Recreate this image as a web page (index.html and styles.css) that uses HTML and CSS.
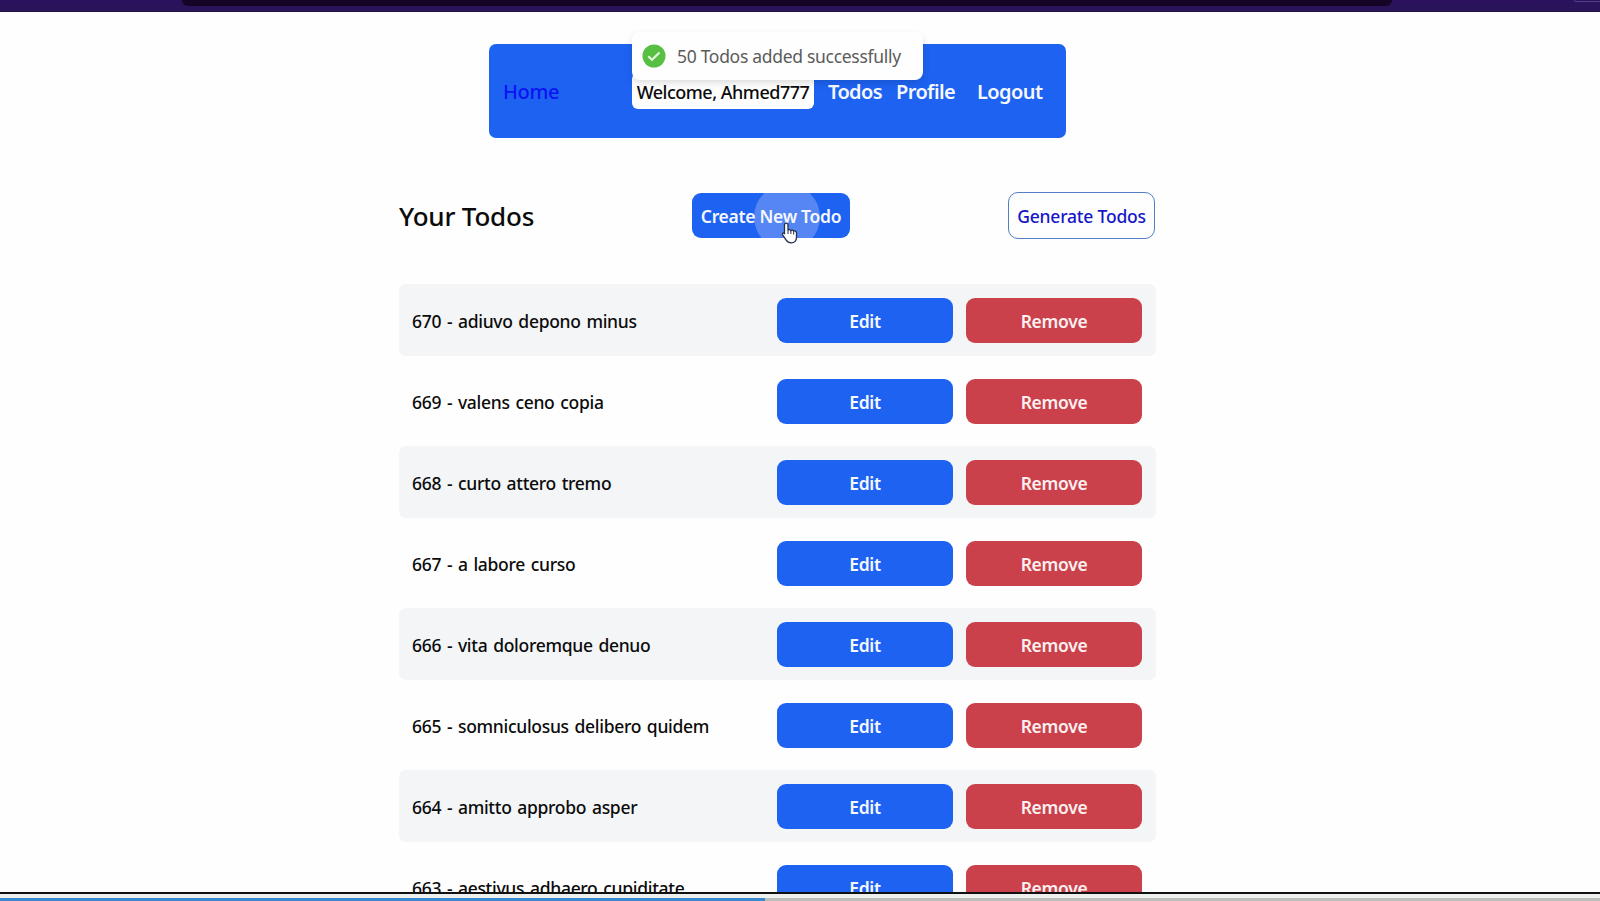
FILE: index.html
```html
<!DOCTYPE html>
<html lang="en">
<head>
<meta charset="utf-8">
<title>Your Todos</title>
<link rel="stylesheet" href="styles.css">
</head>
<body>
<div class="browser-edge"><div class="address"></div><div class="edge-tab"></div></div>
<main class="page">
  <nav class="navbar">
    <a class="home">Home</a>
    <span class="welcome">Welcome, Ahmed777</span>
    <a class="nav-todos">Todos</a>
    <a class="nav-profile">Profile</a>
    <a class="nav-logout">Logout</a>
  </nav>
  <header class="heading">
    <h1>Your Todos</h1>
    <button class="btn create"><span class="ripple"></span><span class="label">Create New Todo</span></button>
    <button class="generate">Generate Todos</button>
  </header>
  <ul class="todos">
    <li><p>670 - adiuvo depono minus</p><button class="btn">Edit</button><button class="btn remove">Remove</button></li>
    <li><p>669 - valens ceno copia</p><button class="btn">Edit</button><button class="btn remove">Remove</button></li>
    <li><p>668 - curto attero tremo</p><button class="btn">Edit</button><button class="btn remove">Remove</button></li>
    <li><p>667 - a labore curso</p><button class="btn">Edit</button><button class="btn remove">Remove</button></li>
    <li><p>666 - vita doloremque denuo</p><button class="btn">Edit</button><button class="btn remove">Remove</button></li>
    <li><p>665 - somniculosus delibero quidem</p><button class="btn">Edit</button><button class="btn remove">Remove</button></li>
    <li><p>664 - amitto approbo asper</p><button class="btn">Edit</button><button class="btn remove">Remove</button></li>
    <li><p>663 - aestivus adhaero cupiditate</p><button class="btn">Edit</button><button class="btn remove">Remove</button></li>
  </ul>
</main>
<div class="toast">
  <svg width="24" height="24" viewBox="0 0 24 24"><circle cx="12" cy="12" r="11.5" fill="#57bf41"/><path d="M6.3 12.200l3.700 3.500 7.500-7.200" fill="none" stroke="#e4f6de" stroke-width="2.200"/></svg>
  <span>50 Todos added successfully</span>
</div>
<svg class="cursor" width="18" height="22" viewBox="0 0 18 22"><path d="M5.3 1.200c1.100 0 1.700.8 1.700 1.800v5.200c.4-.9 2.500-.8 2.900.4.700-.8 2.300-.5 2.700.6 1-.6 2.900-.1 2.900 1.600v4.400c0 3.200-2 5.600-5.200 5.600-2.700 0-4-.9-5.100-2.700L1.600 12.800c-.8-1.400.8-2.400 1.900-1.400V3c0-1 .7-1.800 1.800-1.800z" fill="#fff" stroke="#25304a" stroke-width="1.300"/><path d="M7 8v4M9.900 9v3M12.700 10v2.500" stroke="#25304a" stroke-width="1"/></svg>
<footer class="player"><div class="track"><div class="played"></div></div></footer>
</body>
</html>
```

FILE: styles.css
```css
* { box-sizing: border-box; }
body {
  margin: 0;
  height: 901px;
  overflow: hidden;
  display: flex;
  flex-direction: column;
  background: #fefefe;
  color: #0b0b0b;
  font-family: "Noto Sans", "Open Sans", sans-serif;
  font-weight: 500;
}
.browser-edge {
  flex: none;
  display: flex;
  justify-content: space-between;
  height: 12px;
  padding-left: 182px;
  background: linear-gradient(#2b1260, #281657 90%, #1c1040);
}
.address { width: 1210px; height: 6px; background: #150425; border-radius: 0 0 6px 6px; }
.edge-tab { width: 26px; height: 2px; border-bottom: 1px solid #51407f; border-left: 1px solid #51407f; border-radius: 0 0 0 3px; }
.page { flex: 1; min-height: 0; width: 757px; margin-left: 399px; overflow: hidden; }
.navbar {
  display: flex;
  align-items: center;
  width: 577px;
  height: 94px;
  margin: 32px 0 0 90px;
  padding-left: 14px;
  border-radius: 7px;
  background: #1d62f0;
  color: #f5f8ff;
  font-size: 20px;
  font-weight: 600;
  letter-spacing: -0.6px;
  white-space: nowrap;
}
.home { width: 129px; color: #0b12f5; font-weight: 500; letter-spacing: -0.4px; }
.welcome {
  width: 182px;
  height: 36px;
  padding-top: 2px;
  line-height: 34px;
  border-radius: 6px;
  background: #fefefe;
  color: #0b0b0b;
  font-size: 18px;
  font-weight: 500;
  text-align: center;
  letter-spacing: -0.5px;
}
.nav-todos { width: 68px; margin-left: 14px; }
.nav-profile { width: 81px; }
.heading { display: flex; justify-content: space-between; align-items: center; height: 47px; margin-top: 54px; }
h1 { width: 293px; margin: 0; padding-top: 1px; font-size: 26px; line-height: 47px; font-weight: 500; letter-spacing: -0.2px; }
button { font-family: inherit; font-size: 17.5px; padding: 0; white-space: nowrap; }
.btn { width: 176px; height: 45px; border: 0; border-radius: 9px; background: #1d62f0; color: #f5f8ff; font-weight: 600; letter-spacing: -0.3px; }
.btn.create { position: relative; width: 158px; overflow: hidden; margin-right: 158px; }
.ripple { position: absolute; left: 62px; top: -9px; width: 66px; height: 66px; border-radius: 50%; background: #5686f3; }
.label { position: relative; }
.generate { width: 147px; height: 47px; border: 1px solid #527fc5; border-radius: 10px; background: #fefefe; color: #1616c8; font-weight: 500; letter-spacing: -0.2px; margin-right: 1px; }
.todos { margin: 45px 0 0; padding: 0; list-style: none; display: grid; gap: 9px; }
.todos li { display: flex; align-items: center; gap: 13px; height: 72.07px; padding: 0 14px 0 13px; border-radius: 7px; }
.todos li:nth-child(odd) { background: #f3f5f7; }
.todos p { flex: 1; margin: 0; padding-top: 2px; font-size: 17.5px; letter-spacing: -0.3px; word-spacing: 1.5px; }
.btn.remove { background: #ca414b; color: #fceff0; }
.todos .btn { padding-top: 1px; }
.toast {
  position: absolute;
  left: 632px;
  top: 32px;
  display: flex;
  align-items: center;
  gap: 11px;
  width: 291px;
  height: 48px;
  padding: 0 0 0 10px;
  border-radius: 8px;
  background: #fefefe;
  box-shadow: 0 3px 7px rgba(0,0,0,.13);
  color: #5b5b5b;
  font-size: 17.5px;
  font-weight: 400;
  letter-spacing: -0.3px;
  white-space: nowrap;
}
.cursor { position: absolute; left: 781px; top: 222px; }
.player { flex: none; height: 9px; padding-top: 4px; background: #eef0ee; border-top: 2px solid #111; }
.track { height: 3px; background: #bbbdbb; }
.played { width: 765px; height: 3px; background: #3889cf; }
```
